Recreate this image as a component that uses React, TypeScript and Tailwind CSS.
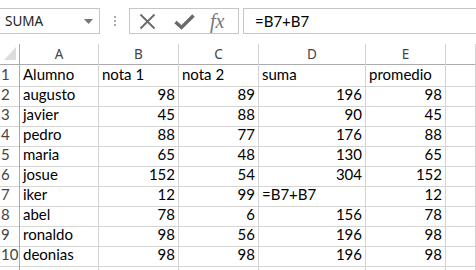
import React from "react";

const rows: [string, string, string, string, string][] = [
  ["Alumno", "nota 1", "nota 2", "suma", "promedio"],
  ["augusto", "98", "89", "196", "98"],
  ["javier", "45", "88", "90", "45"],
  ["pedro", "88", "77", "176", "88"],
  ["maria", "65", "48", "130", "65"],
  ["josue", "152", "54", "304", "152"],
  ["iker", "12", "99", "=B7+B7", "12"],
  ["abel", "78", "6", "156", "78"],
  ["ronaldo", "98", "56", "196", "98"],
  ["deonias", "98", "98", "196", "98"],
];

const cols = ["A", "B", "C", "D", "E", ""];
const gridCols = "grid grid-cols-[20px_79px_80px_80px_107px_80px_1fr]";

function isNum(s: string) {
  return /^\d+$/.test(s);
}

export default function App() {
  return (
    <div className="w-[476px] h-[270px] overflow-hidden bg-white" style={{ fontFamily: "Lato, 'Liberation Sans', sans-serif" }}>
      {/* top formula bar */}
      <div className="h-[44px] flex items-start pt-[8px]">
        <div className="-ml-px w-[101px] h-[26px] border border-[#c6c6c6] flex items-center justify-between pl-[5px] pr-[6px]">
          <span className="text-[13.5px] text-[#222]" style={{ fontFamily: "'Noto Sans', sans-serif" }}>SUMA</span>
          <svg width="9" height="5" viewBox="0 0 9 5"><path d="M0 0h9L4.5 5z" fill="#777" /></svg>
        </div>
        <div className="w-[29px] h-[26px] flex flex-col items-center justify-center gap-[2px]">
          <span className="w-[2px] h-[2px] bg-[#aaa]" />
          <span className="w-[2px] h-[2px] bg-[#aaa]" />
          <span className="w-[2px] h-[2px] bg-[#aaa]" />
        </div>
        <div className="w-[110px] h-[26px] border border-[#c6c6c6] flex items-center pl-[9px]">
          <svg width="17" height="17" viewBox="0 0 17 17"><path d="M1.5 1.5L15.5 15.5M15.5 1.5L1.5 15.5" stroke="#6a6a6a" strokeWidth="1.8" /></svg>
          <svg className="ml-[18px]" width="21" height="17" viewBox="0 0 21 17"><path d="M1.5 9L7.5 14.5L19.5 2.5" stroke="#6a6a6a" strokeWidth="3.4" fill="none" /></svg>
          <span className="ml-[15px] text-[20px] italic text-[#777] leading-none" style={{ fontFamily: "'Liberation Serif', serif" }}>fx</span>
        </div>
        <div className="ml-[4px] flex-1 h-[26px] border border-[#c6c6c6] -mr-px flex items-center pl-[11px]">
          <span className="text-[15px] text-black">=B7+B7</span>
        </div>
      </div>
      {/* column headers */}
      <div className={`${gridCols} h-[19px]`}>
        <div className="relative border-r border-b border-[#ababab]">
          <svg className="absolute left-[4px] top-[3px]" width="12" height="13" viewBox="0 0 12 13"><path d="M12 0V13H0z" fill="#dcdcdc" /></svg>
        </div>
        {cols.map((c, i) => (
          <div key={i} className="border-r border-b border-r-[#d4d4d4] border-b-[#ababab] flex items-center justify-center text-[13.5px] text-[#444]" style={{ fontFamily: "'Noto Sans', sans-serif" }}>
            {c}
          </div>
        ))}
      </div>
      {/* rows */}
      {rows.map((r, ri) => (
        <div key={ri} className={`${gridCols} h-[20px]`}>
          <div className="border-r border-b border-r-[#ababab] border-b-[#d4d4d4] flex items-center pl-[1px] text-[15px] text-[#444]">
            {ri + 1}
          </div>
          {r.map((v, ci) => (
            <div
              key={ci}
              className={`border-r border-b border-[#d4d4d4] flex items-center px-[3px] text-[15px] text-black whitespace-nowrap overflow-visible ${isNum(v) ? "justify-end" : "justify-start"}`}
            >
              {v}
            </div>
          ))}
          <div className="border-r border-b border-[#d4d4d4]" />
        </div>
      ))}
      <div className={`${gridCols} h-[20px]`}>
        <div className="border-r border-r-[#ababab]" />
        {cols.map((c, i) => (
          <div key={i} className="border-r border-[#d4d4d4]" />
        ))}
      </div>
    </div>
  );
}
